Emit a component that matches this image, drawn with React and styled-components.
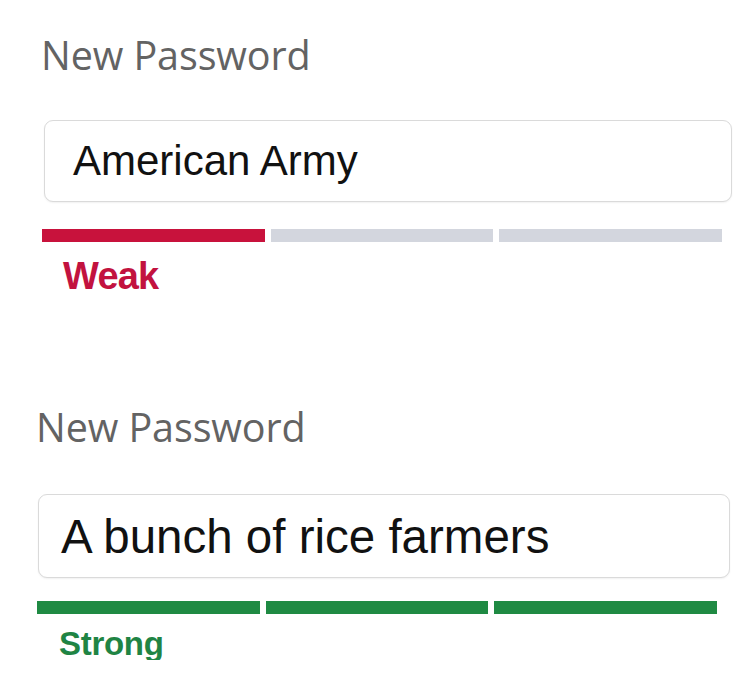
import React from "react";
import styled, { createGlobalStyle } from "styled-components";

const Global = createGlobalStyle`
  html, body { margin: 0; padding: 0; background: #ffffff; }
  body { font-family: "Liberation Sans", Arial, sans-serif; }
`;

const Page = styled.div`
  display: flex;
  flex-direction: column;
  padding-top: 36px;
  width: 750px;
`;

const Field = styled.section`
  display: flex;
  flex-direction: column;
  align-items: flex-start;
  padding-left: ${(p) => p.$left}px;
  margin-top: ${(p) => p.$top || 0}px;
`;

const Label = styled.div`
  font-family: "Open Sans", "Noto Sans", sans-serif;
  font-weight: 400;
  font-size: 39.5px;
  line-height: 1;
  color: #636363;
  letter-spacing: -0.1px;
  margin-left: ${(p) => p.$shift || 0}px;
`;

const InputBox = styled.div`
  box-sizing: border-box;
  display: flex;
  align-items: center;
  width: ${(p) => p.$width}px;
  height: ${(p) => p.$height}px;
  margin-top: ${(p) => p.$gap}px;
  margin-left: ${(p) => p.$shift || 0}px;
  padding-left: ${(p) => p.$pad}px;
  border: 1.5px solid #dadada;
  border-radius: 9px;
  box-shadow: 0 1px 2px rgba(0, 0, 0, 0.06);
  background: #fff;
  font-family: "Liberation Sans", Arial, sans-serif;
  font-size: ${(p) => p.$size}px;
  color: #111;
  white-space: nowrap;
`;

const Meter = styled.div`
  display: flex;
  gap: 6px;
  width: 680px;
  height: 13px;
  margin-top: ${(p) => p.$gap}px;
`;

const Segment = styled.div`
  flex: 1;
  background: ${(p) => p.$color};
  filter: blur(0.4px);
`;

const Status = styled.div`
  font-family: "Liberation Sans", Arial, sans-serif;
  font-weight: 700;
  font-size: ${(p) => p.$size}px;
  line-height: 1;
  letter-spacing: ${(p) => p.$tracking || 0}px;
  color: ${(p) => p.$color};
  margin-top: ${(p) => p.$gap}px;
  margin-left: ${(p) => p.$indent}px;
`;

const EMPTY = "#d3d6de";

const fields = [
  {
    left: 42,
    top: 0,
    labelShift: -1,
    input: { text: "American Army", width: 688, height: 82, gap: 44, shift: 2, pad: 28, size: 42 },
    meter: { gap: 27, filled: 1, color: "#c8123c" },
    status: { text: "Weak", color: "#c2123f", size: 38, tracking: -0.8, gap: 15, indent: 21 },
  },
  {
    left: 37,
    top: 113,
    labelShift: -1,
    input: { text: "A bunch of rice farmers", width: 692, height: 84, gap: 47, shift: 1, pad: 22, size: 47.5 },
    meter: { gap: 23, filled: 3, color: "#1f8a43" },
    status: { text: "Strong", color: "#1f8444", size: 33, tracking: -0.3, gap: 13, indent: 22 },
  },
];

export default function App() {
  return (
    <>
      <Global />
      <Page>
        {fields.map((f, i) => (
          <Field key={i} $left={f.left} $top={f.top}>
            <Label $shift={f.labelShift}>New Password</Label>
            <InputBox
              $width={f.input.width}
              $height={f.input.height}
              $gap={f.input.gap}
              $shift={f.input.shift}
              $pad={f.input.pad}
              $size={f.input.size}
            >
              {f.input.text}
            </InputBox>
            <Meter $gap={f.meter.gap}>
              {[0, 1, 2].map((s) => (
                <Segment key={s} $color={s < f.meter.filled ? f.meter.color : EMPTY} />
              ))}
            </Meter>
            <Status
              $color={f.status.color}
              $size={f.status.size}
              $tracking={f.status.tracking}
              $gap={f.status.gap}
              $indent={f.status.indent}
            >
              {f.status.text}
            </Status>
          </Field>
        ))}
      </Page>
    </>
  );
}
